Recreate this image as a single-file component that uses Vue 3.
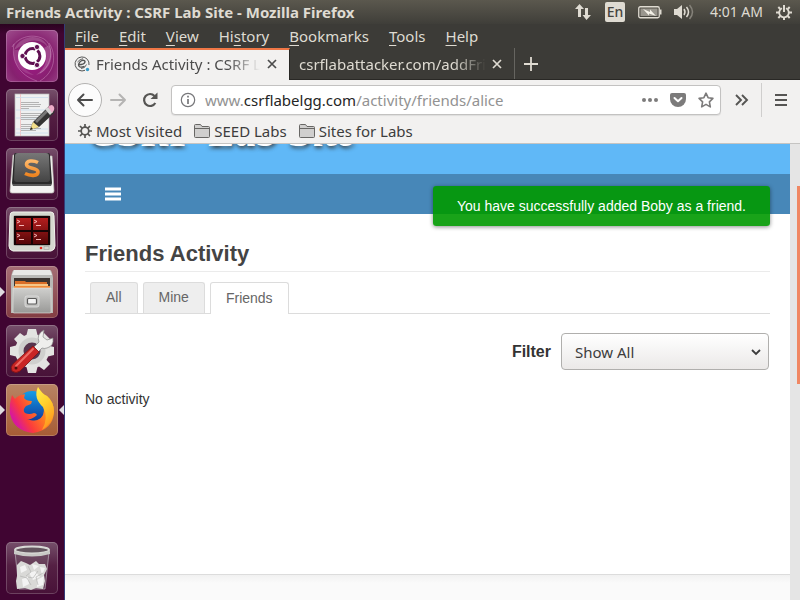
<script setup>
import { ref } from 'vue'

const menus = ['File', 'Edit', 'View', 'History', 'Bookmarks', 'Tools', 'Help']
const mnemonics = { History: 2 }
const menuParts = menus.map((name) => {
  const at = mnemonics[name] ?? 0
  return { name, before: name.slice(0, at), key: name[at], after: name.slice(at + 1) }
})
const address = ref('www.csrflabelgg.com/activity/friends/alice')
const filter = ref('Show All')
const current = ref('Friends')
const tabs = ['All', 'Mine', 'Friends']
</script>

<template>
  <div class="desktop">
    <header class="panel">
      <span class="window-title">Friends Activity : CSRF Lab Site - Mozilla Firefox</span>
      <div class="indicators">
        <svg width="18" height="18" viewBox="0 0 18 18" fill="#dfdbd2">
          <path d="M5.500 1 10 6H7v8H4V6H1z" /><path d="M12.500 17 8.500 12h2.500V5h3v7h3z" />
        </svg>
        <span class="lang">En</span>
        <svg class="ind-bat" width="24" height="14" viewBox="0 0 24 14">
          <rect x="0.750" y="1.750" width="20.500" height="11" rx="1.500" fill="none" stroke="#dfdbd2" stroke-width="1.300" />
          <rect x="2.500" y="3.500" width="17" height="7.500" fill="#99968e" />
          <path d="M22 4.500h1.500v5H22z" fill="#dfdbd2" />
          <path d="M5 4l7 3V4.500L18 11l-7-2.500v2z" fill="#f4f1e8" />
        </svg>
        <svg width="20" height="16" viewBox="0 0 20 16" fill="none" stroke="#dfdbd2" stroke-width="1.500">
          <path d="M0 5h3l5-4v14l-5-4H0z" fill="#dfdbd2" stroke="none" />
          <path d="M10 5q2 3 0 6" /><path d="M12.500 3q4 5 0 10" /><path d="M15.500 1q6 7 0 14" stroke="#85827a" />
        </svg>
        <span class="clock">4:01 AM</span>
        <svg width="16" height="16" viewBox="0 0 16 16" fill="none" stroke="#dfdbd2">
          <path d="M6 4.200a4.800 4.800 0 1 0 4 0" stroke-width="1.800" />
          <path d="M8 1v7" stroke-width="2" />
          <path d="M8 13.500V16M0 8.500h3M13 8.500h3M2.300 3l2 2M13.700 3l-2 2M2.300 14l2-2M13.700 14l-2-2" stroke-width="2" />
        </svg>
      </div>
    </header>

    <div class="workspace">
      <nav class="launcher" aria-label="Launcher">
        <button class="tile dash" aria-label="Search your computer">
          <svg viewBox="0 0 52 52">
            <g fill="none" stroke="#f0c4e6" stroke-opacity="0.400" stroke-width="0.800">
              <path d="M6 17C11 9 24 2 38 9C48 15 47 35 34 43" />
              <path d="M8 14C5 31 13 45 31 51" />
              <path d="M34 51C49 42 51 25 43 13" />
            </g>
            <path d="M8 20C14 5 36 1 43 19C38 10 26 8 18 14Z" fill="#fff" fill-opacity="0.180" />
            <path d="M43 15C50 28 42 42 30 45C40 38 43 28 38 18Z" fill="#fff" fill-opacity="0.180" />
            <path d="M8 20C6 34 16 44 28 45C18 40 12 32 14 20Z" fill="#fff" fill-opacity="0.120" />
            <circle cx="26" cy="26" r="14" fill="#fff" />
            <circle cx="26.500" cy="26" r="7.400" fill="none" stroke="#601052" stroke-width="3" stroke-dasharray="13.200 2.300" stroke-dashoffset="-9" />
            <g fill="#601052" stroke="#fff" stroke-width="0.800"><circle cx="16.500" cy="26" r="2.600" /><circle cx="31" cy="17" r="2.600" /><circle cx="31" cy="35" r="2.600" /></g>
          </svg>
        </button>
        <button class="tile" aria-label="Text Editor">
          <svg viewBox="0 0 52 52">
            <rect x="9" y="5" width="34" height="42" fill="#eff0f0" stroke="#bbb" stroke-width="0.700" />
            <path d="M14.500 5v42" stroke="#f3b5b5" stroke-width="0.700" />
            <path d="M10 8.500h32M10 21h32M10 29h32M10 40h32M10 44h32" stroke="#c9dcec" stroke-width="0.800" />
            <path d="M15 13.500h18M15 15.500h20M15 17.500h19M15 19.500h8M15 24.500h20M15 26.500h18M15 28.500h17M15 30.500h14M15 35.500h15M15 37.500h12M15 39.500h20M15 41.500h15" stroke="#a5a5a5" stroke-width="0.800" />
            <path d="M24 41l3-8 14-14q3-4 6 0t0 6L33 38z" fill="#343434" />
            <path d="M29 32 42 19l2 2-13 13z" fill="#777" /><path d="M39 20l3-2 5 5-3 3z" fill="#d7d7d7" />
            <path d="M42 18q4-4 6 0 1 3-2 6z" fill="#edacc8" />
            <path d="M24 41l3-8 6 5z" fill="#f2df8a" /><path d="M24 41l1-3 2 2z" fill="#222" />
          </svg>
        </button>
        <button class="tile" aria-label="Sublime Text">
          <svg viewBox="0 0 52 52">
            <defs>
              <linearGradient id="key" x2="0" y2="1"><stop stop-color="#777" /><stop offset="1" stop-color="#444" /></linearGradient>
              <linearGradient id="ess" x2="0" y2="1"><stop stop-color="#ffb869" /><stop offset="1" stop-color="#ee8420" /></linearGradient>
            </defs>
            <path d="M7 7h4L7 37h38L42 8h4l2 35q0 2-2 2H6q-2 0-2-2z" fill="#f3f3f1" stroke="#c0c0b8" stroke-width="0.700" />
            <path d="M10 5h32q2 0 2 2l2 28-1 3H7l-1-3L8 7q0-2 2-2z" fill="#292929" />
            <path d="M12 5h28q3 0 3 3l1 23q0 3-3 3H11q-3 0-3-3L9 8q0-3 3-3z" fill="url(#key)" />
            <path d="M7 37h38" stroke="#686868" stroke-width="1.500" />
            <path d="M32 14.500C27 12 20.500 12.500 20.500 16.500C20.500 21 32 19.500 32 24C32 28.500 24 28 19 25.500" fill="none" stroke="url(#ess)" stroke-width="3.600" />
          </svg>
        </button>
        <button class="tile" aria-label="Terminator">
          <svg viewBox="0 0 52 52">
            <defs><linearGradient id="term" x2="0" y2="1"><stop stop-color="#b51e1e" /><stop offset="1" stop-color="#540607" /></linearGradient></defs>
            <path d="M7 5h38q3 0 3 4l1 30q0 4-4 5H7q-4-1-4-5L4 9q0-4 3-4z" fill="#d5d8cf" stroke="#f1f2ec" />
            <rect x="7" y="8" width="38" height="31" rx="3" fill="#a8aaa2" />
            <rect x="8" y="9" width="36" height="29" fill="#160405" />
            <g fill="url(#term)"><path d="M10 11h15v12H10zM27 11h15v12H27zM10 25h15v12H10zM27 25h15v12H27z" /></g>
            <g fill="none" stroke="#ffc5c5" stroke-width="0.900"><path d="M11 13l3 1.500-3 1.500M13 18.500h5M28 13l3 1.500-3 1.500M30 18.500h5M11 27l3 1.500-3 1.500M13 32.500h5M28 27l3 1.500-3 1.500M30 32.500h5" /></g>
            <circle cx="35" cy="41" r="1.300" fill="#e62a20" /><rect x="38" y="39.500" width="5" height="3" fill="none" stroke="#aaa" stroke-width="0.700" />
          </svg>
        </button>
        <button class="tile files running" aria-label="Files">
          <svg viewBox="0 0 52 52">
            <defs><linearGradient id="cab" x2="0" y2="1"><stop stop-color="#cfcfcd" /><stop offset="1" stop-color="#999997" /></linearGradient></defs>
            <path d="M8 4h36q2 0 3 8v35H5V12q1-8 3-8z" fill="#b9b9b6" /><path d="M8 4h36l2 5H6z" fill="#e8e8e6" />
            <rect x="8" y="12" width="36" height="12" fill="#3c3430" />
            <path d="M9 15h10l1 1h21v8H9z" fill="#d96e28" /><path d="M9 18h33v2H9z" fill="#f5c688" /><path d="M8 20h36v2H8z" fill="#ef8a38" />
            <path d="M7 22h38v24q0 1-1 1H8q-1 0-1-1z" fill="url(#cab)" stroke="#e5e5e3" stroke-width="0.600" />
            <rect x="19" y="30" width="14" height="11" rx="2" fill="#c2c2c0" stroke="#e2e2e2" stroke-width="0.800" /><rect x="21.500" y="32.500" width="9" height="5.500" rx="1" fill="#f3f3f3" stroke="#5b5b5b" stroke-width="1.200" />
          </svg>
        </button>
        <button class="tile" aria-label="System Settings">
          <svg viewBox="0 0 52 52">
            <g fill="#e3e3e1"><circle cx="26" cy="26" r="17" /><path d="M22 4h8l2 8H20zM22 48h8l2-8H20zM4 22v8l8 2V20zM48 22v8l-8 2V20zM8 14l6-6 7 5-7 8zM44 14l-6-6-7 5 7 8zM8 39l6 6 7-5-7-8zM44 39l-6 6-7-5 7-8z" /></g>
            <circle cx="26" cy="26" r="11" fill="#57344d" stroke="#cfcfcd" stroke-width="5" />
            <path d="M29 27l-2-4 6-6Q30 9 38 5l-1 7 4 3 6-2q1 8-6 10-3 1-5 0l-5 5z" fill="#efefed" stroke="#888" stroke-width="0.700" />
            <path d="M27 21l6 6-19 19q-4 3-8 0-2-4 1-7z" fill="#c92525" stroke="#801111" stroke-width="0.800" />
            <path d="M27 24 10 41" stroke="#ee6c65" stroke-width="2" stroke-linecap="round" /><circle cx="10" cy="43" r="1.500" fill="#550c0c" />
          </svg>
        </button>
        <button class="tile fox running focused" aria-label="Firefox">
          <svg viewBox="0 0 52 52">
            <defs>
              <linearGradient id="foxbody" x1="0.900" y1="0.200" x2="0.100" y2="0.700"><stop stop-color="#ffb824" /><stop offset="0.400" stop-color="#ff7b22" /><stop offset="0.750" stop-color="#fb3b3c" /><stop offset="1" stop-color="#d9199a" /></linearGradient>
              <linearGradient id="flame" x2="0.400" y2="1"><stop stop-color="#fff04f" /><stop offset="0.500" stop-color="#ffcf2c" /><stop offset="1" stop-color="#ff9a20" /></linearGradient>
              <linearGradient id="globe" x2="0" y2="1"><stop stop-color="#139de7" /><stop offset="1" stop-color="#123a9c" /></linearGradient>
            </defs>
            <circle cx="26" cy="22" r="15" fill="url(#globe)" />
            <path d="M6 11L9 15Q12 11 19 10L18 14Q20 17 26 17L25 20L20 22Q16 26 19 29Q23 31 28 29Q30 29 31 31Q26 36 21 35Q32 40 37 31Q40 23 33 17Q29 11 32 3Q36 10 41 12Q48 18 48 28Q47 46 27 49Q8 47 4 30Q3 20 6 11Z" fill="url(#foxbody)" />
            <path d="M32 3Q36 10 41 12Q48 18 48 28Q46 40 36 46Q43 34 37 23Q27 14 32 3Z" fill="url(#flame)" />
          </svg>
        </button>
        <button class="tile trash" aria-label="Trash">
          <svg viewBox="0 0 52 52">
            <path d="M9 10h34l-4 37H13z" fill="#80707a" fill-opacity="0.350" stroke="#b9aeb8" stroke-width="0.700" />
            <path d="M11 23l4-4 5 2 4 2 6-4 3 3 6 0 2 5-3 6 1 6-2 8-7-1-5 2-6-2-8 1-1-8 1-5z" fill="#d9d9d7" />
            <path d="M14 25l5-2 2 5-6 3zM26 22l7 2-5 4zM23 31l6-2 5 6-7 3zM16 37l6-2 1 7-6 3zM31 38l7-4-1 9-6 2zM34 25l5 1-3 7z" fill="#f3f3f3" />
            <path d="M22 24l3 6-5 4M32 29l-5 7-5-1M14 34l7 2 4 7M37 31l-7 4 2 8" stroke="#b5b5b3" fill="none" stroke-width="0.700" />
            <ellipse cx="26" cy="8" rx="17" ry="3.500" fill="#64555f" stroke="#d8d8d5" stroke-width="2" />
            <path d="M8 9q18 6 36 0v3q-18 5-36 0z" fill="#c9c9c6" />
          </svg>
        </button>
      </nav>

      <div class="browser">
        <nav class="menubar" aria-label="Menu bar">
          <button v-for="m in menuParts" :key="m.name">{{ m.before }}<u>{{ m.key }}</u>{{ m.after }}</button>
        </nav>

        <div class="tabstrip">
          <div class="browser-tab active">
            <svg width="16" height="16" viewBox="0 0 16 16" fill="none" stroke="#555">
              <path d="M11 14.300A7 7 0 1 1 15 9" stroke-width="1" />
              <path d="M4.500 8.700Q10.500 8.500 11 5.800Q11 4 8.500 4.300Q5 5.300 4.500 9Q5 12.500 10.500 10.300" stroke-width="1.400" />
              <path d="M3.500 6Q6 3 9 2.700M7 12.500Q11 12.500 12.500 8.500" stroke-width="0.900" />
              <circle cx="13.500" cy="13.500" r="1.700" fill="#3a9cc8" stroke="none" />
            </svg>
            <span class="tab-title">Friends Activity : CSRF Lab Site</span>
            <button class="close" aria-label="Close tab"><svg width="12" height="12" viewBox="0 0 12 12"><path d="M2 2l8 8M10 2l-8 8" stroke="currentColor" stroke-width="1.700" /></svg></button>
          </div>
          <div class="browser-tab">
            <span class="tab-title">csrflabattacker.com/addFriend.html</span>
            <button class="close" aria-label="Close tab"><svg width="12" height="12" viewBox="0 0 12 12"><path d="M2 2l8 8M10 2l-8 8" stroke="currentColor" stroke-width="1.700" /></svg></button>
          </div>
          <button class="new-tab" aria-label="New tab"><svg width="16" height="16" viewBox="0 0 16 16"><path d="M8 1v14M1 8h14" stroke="currentColor" stroke-width="1.800" /></svg></button>
        </div>

        <div class="toolbar">
          <button class="back" aria-label="Back"><svg width="18" height="16" viewBox="0 0 18 16" fill="none" stroke="#4c4c4c" stroke-width="2" stroke-linecap="round" stroke-linejoin="round"><path d="M16 8H2M7.500 2.500 2 8l5.500 5.500" /></svg></button>
          <button class="forward" aria-label="Forward"><svg width="18" height="16" viewBox="0 0 18 16" fill="none" stroke="#b5b4b3" stroke-width="2" stroke-linecap="round" stroke-linejoin="round"><path d="M2 8h14M10.500 2.500 16 8l-5.500 5.500" /></svg></button>
          <button class="reload" aria-label="Reload"><svg width="18" height="16" viewBox="0 0 18 16" fill="none" stroke="#565553" stroke-width="2.200"><path d="M13.500 3.900A6 6 0 1 0 14.300 11" /><path d="M16.500 0.500V7h-7z" fill="#565553" stroke="none" /></svg></button>
          <div class="urlbar">
            <svg width="16" height="16" viewBox="0 0 16 16" fill="none" stroke="#77777a"><circle cx="8" cy="8" r="6.700" stroke-width="1.200" /><path d="M8 7v5M8 3.700v1.800" stroke-width="1.700" /></svg>
            <div class="address">
              <input id="address" v-model="address" aria-label="Address" />
              <span class="address-text" aria-hidden="true">www.<b>csrflabelgg.com</b>/activity/friends/alice</span>
            </div>
            <button aria-label="Page actions"><svg width="16" height="16" viewBox="0 0 16 16" fill="#7c7b7b"><circle cx="2" cy="8" r="2" /><circle cx="8" cy="8" r="2" /><circle cx="14" cy="8" r="2" /></svg></button>
            <button aria-label="Save to Pocket"><svg width="16" height="16" viewBox="0 0 16 16"><path d="M2 1h12q2 0 2 2v4a8 8 0 0 1-16 0V3q0-2 2-2z" fill="#7c7b7b" /><path d="M4.500 6 8 9.300 11.500 6" fill="none" stroke="#fff" stroke-width="2" stroke-linecap="round" stroke-linejoin="round" /></svg></button>
            <button aria-label="Bookmark this page"><svg width="16" height="16" viewBox="0 0 16 16"><path d="M8 1.200l2.100 4.500 4.800.7-3.500 3.500.9 5L8 12.400l-4.300 2.500.9-5L1.100 6.400l4.800-.7z" fill="none" stroke="#7c7b7b" stroke-width="1.600" stroke-linejoin="round" /></svg></button>
          </div>
          <button class="overflow" aria-label="More tools"><svg width="14" height="14" viewBox="0 0 14 14" fill="none" stroke="#565553" stroke-width="1.900"><path d="M1 2l5 5-5 5M7 2l5 5-5 5" /></svg></button>
          <button class="app-menu" aria-label="Open menu"><svg width="12" height="12" viewBox="0 0 12 12"><path d="M0 1h12M0 6h12M0 11h12" stroke="#565553" stroke-width="2" /></svg></button>
        </div>

        <nav class="bookmarks" aria-label="Bookmarks">
          <a href="#most-visited">
            <svg width="14" height="14" viewBox="0 0 14 14" fill="none" stroke="#565553"><circle cx="7" cy="7" r="3.800" stroke-width="1.700" /><path d="M7 0v3M7 11v3M0 7h3M11 7h3M2 2l2.300 2.300M9.700 9.700 12 12M12 2 9.700 4.300M4.300 9.700 2 12" stroke-width="1.700" /></svg>
            Most Visited
          </a>
          <a v-for="b in ['SEED Labs', 'Sites for Labs']" :key="b" href="#folder">
            <svg width="16" height="14" viewBox="0 0 16 14"><path d="M.5 12.500v-11q0-1 1-1h5l1.500 2h6.500q1 0 1 1v9q0 1-1 1h-13q-1 0-1-1z" fill="#d0cfce" stroke="#686765" /><path d="M1 4.500h14" stroke="#686765" /></svg>
            {{ b }}
          </a>
        </nav>

        <div class="viewport">
          <div class="page">
            <header class="site-header"><h1>CSRF Lab Site</h1></header>
            <div class="site-nav">
              <button aria-label="Site menu"><svg width="16" height="14" viewBox="0 0 16 14"><path d="M0 2h16M0 7h16M0 12h16" stroke="#fff" stroke-width="3" /></svg></button>
              <div class="message" role="status">You have successfully added Boby as a friend.</div>
            </div>
            <main>
              <h2>Friends Activity</h2>
              <nav class="filter-tabs" aria-label="Activity">
                <a v-for="t in tabs" :key="t" href="#activity" :class="{ selected: t === current }" @click.prevent="current = t">{{ t }}</a>
              </nav>
              <div class="filter">
                <label for="filter">Filter</label>
                <div class="select">
                  <select id="filter" v-model="filter"><option>Show All</option></select>
                  <svg width="10" height="8" viewBox="0 0 10 8"><path d="M1 2l4 4 4-4" fill="none" stroke="#3c3c3c" stroke-width="1.800" /></svg>
                </div>
              </div>
              <p>No activity</p>
            </main>
            <footer></footer>
          </div>
          <div class="scrollbar"><div class="thumb"></div></div>
        </div>
      </div>
    </div>
  </div>
</template>

<style>
body { margin: 0; }
</style>

<style scoped>
* { box-sizing: border-box; }
button { border: 0; padding: 0; background: none; color: inherit; font: inherit; }
svg { display: block; flex: none; }
a { color: inherit; text-decoration: none; }
.desktop { display: flex; flex-direction: column; min-height: 100vh; font: 15px/20px "Noto Sans", sans-serif; background: #400532; }
.panel { display: flex; align-items: center; justify-content: space-between; height: 24px; padding: 0 8px 0 6px; color: #dfdbd2; background: linear-gradient(#5b584e, #3f3e39); white-space: nowrap; }
.window-title { font-weight: 700; }
.indicators { display: flex; align-items: center; font-size: 14px; }
.lang { display: grid; place-items: center; width: 20px; height: 20px; margin: 0 13px; border-radius: 2px; font-weight: 500; color: #45433e; background: #dfdbd2; }
.ind-bat { margin-right: 12px; }
.clock { margin: 0 13px 0 16px; }
.workspace { display: flex; flex: 1; }
.launcher { display: flex; flex-direction: column; gap: 7px; flex: none; width: 65px; padding: 6px; border-right: 1px solid #343c78; background: linear-gradient(#2b0320, #400532 10px); }
.tile { position: relative; width: 52px; height: 52px; border-radius: 5px; background: linear-gradient(#76506b, #552044 45%, #481238); box-shadow: inset 0 0 0 1px rgba(255, 255, 255, 0.2); }
.tile svg { width: 52px; height: 52px; }
.dash { background: radial-gradient(circle at 50% 60%, #a01886, #86216f 55%, #a0508f); }
.files { background: linear-gradient(#a56e75, #823c42); }
.fox { background: linear-gradient(#b98464, #a65c35); }
.trash { margin-top: auto; }
.running::before, .focused::after { content: ""; position: absolute; top: 21px; border: 5px solid transparent; }
.running::before { left: -6px; border-left-color: #dedbdf; border-right-width: 0; }
.focused::after { right: -6px; border-right-color: #dedbdf; border-left-width: 0; }
.browser { display: flex; flex-direction: column; flex: 1; min-width: 0; color: #3d3d3d; background: #f2f1f0; }
.menubar { display: flex; gap: 20px; height: 24px; padding: 0 10px; color: #dfdbd2; background: #3c3b37; line-height: 24px; }
.menubar u { text-underline-offset: 3px; }
.tabstrip { display: flex; height: 32px; color: #dfdbd2; background: #3c3b37; border-bottom: 1px solid #292825; }
.browser-tab { display: flex; align-items: center; flex: 0 1 225px; min-width: 0; gap: 5px; padding: 0 11px 0 9px; border-right: 1px solid #666560; }
.browser-tab.active { margin-bottom: -1px; padding-bottom: 2px; gap: 6px; color: #4c4c4c; background: #f2f1f0; border-top: 2px solid #f07746; border-right-color: #292825; }
.tab-title { flex: 1; min-width: 0; overflow: hidden; white-space: nowrap; mask-image: linear-gradient(to left, transparent, #000 32px); }
.new-tab { padding: 0 8px; }
.toolbar { display: flex; align-items: center; height: 40px; padding: 0 13px 0 3px; }
.back { display: grid; place-items: center; width: 34px; height: 34px; border: 1px solid #b3b2b1; border-radius: 50%; background: #fcfcfc; }
.forward { margin: 0 14px 0 7px; }
.urlbar { display: flex; align-items: center; gap: 12px; flex: 1; height: 30px; min-width: 0; margin: 0 14px 0 12px; padding: 0 6px 0 8px; border: 1px solid #c3c2c1; border-radius: 4px; background: #fff; box-shadow: 0 1px 1px rgba(0, 0, 0, 0.08); }
.address { display: grid; align-items: center; flex: 1; min-width: 0; margin-left: -3px; }
.address > * { grid-area: 1 / 1; }
.address input { width: 100%; min-width: 0; padding: 0; border: 0; outline: 0; font: inherit; color: transparent; background: none; caret-color: #333; }
.address-text { pointer-events: none; color: #929292; white-space: nowrap; overflow: hidden; }
.address-text b { font-weight: 400; color: #252525; }
.app-menu { display: grid; place-items: center; height: 34px; margin-left: 12px; padding-left: 13px; border-left: 1px solid #cfcecd; }
.bookmarks { display: flex; align-items: center; gap: 12px; height: 24px; padding: 0 13px 2px; border-bottom: 1px solid #c5c4c2; white-space: nowrap; }
.bookmarks a { display: flex; align-items: center; gap: 4px; }
.viewport { display: flex; flex: 1; }
.page { display: flex; flex-direction: column; flex: 1; min-width: 0; font: 14px/20px "Liberation Sans", sans-serif; background: #fff; }
.site-header { display: flex; align-items: flex-end; height: 30px; padding: 0 24px 22px; overflow: hidden; background: #60b8f7; }
h1 { margin: 0; font: italic 700 43px/40px "Liberation Serif", serif; color: #fff; text-shadow: 1px 2px 4px #333; white-space: nowrap; }
.site-nav { position: relative; display: flex; align-items: center; height: 40px; padding: 0 40px; background: #4787b8; }
.message { position: absolute; z-index: 1; top: 12px; right: 20px; padding: 10px 24px; border-radius: 3px; color: #fff; background: rgba(0, 153, 0, 0.9); box-shadow: 0 1px 4px rgba(0, 0, 0, 0.45); white-space: nowrap; }
main { flex: 1; padding: 25px 20px; }
h2 { margin: 0 0 10px; padding-bottom: 2px; border-bottom: 1px solid #ebebeb; font-size: 22px; line-height: 30px; color: #444; }
.filter-tabs { display: flex; align-items: flex-end; gap: 5px; padding: 0 5px; border-bottom: 1px solid #dcdcdc; color: #666; }
.filter-tabs a { height: 31px; padding: 0 15px; border: 1px solid #dcdcdc; border-bottom: 0; border-radius: 3px 3px 0 0; line-height: 29px; background: #eee; }
.filter-tabs .selected { height: 32px; margin-bottom: -1px; line-height: 31px; background: #fff; }
.filter { display: flex; align-items: center; justify-content: flex-end; gap: 10px; margin: 19px 1px; }
.filter label { font-size: 16px; font-weight: 700; color: #333; }
.select { display: grid; align-items: center; width: 208px; }
.select > * { grid-area: 1 / 1; }
.select svg { justify-self: end; margin-right: 8px; pointer-events: none; }
select { appearance: none; width: 100%; height: 37px; padding: 0 13px; border: 1px solid #b0afad; border-radius: 4px; font: 15px "Noto Sans", sans-serif; color: #3c3c3c; background: linear-gradient(#fff, #ebe9e8); }
p { margin: 0; color: #333; }
footer { height: 26px; border-top: 1px solid #dcdcdc; background: linear-gradient(#f1f1f1, #fafafa 8px); }
.scrollbar { width: 10px; padding: 42px 0 0 7px; background: #e5e5e5; }
.thumb { height: 198px; background: #f08763; }
</style>
